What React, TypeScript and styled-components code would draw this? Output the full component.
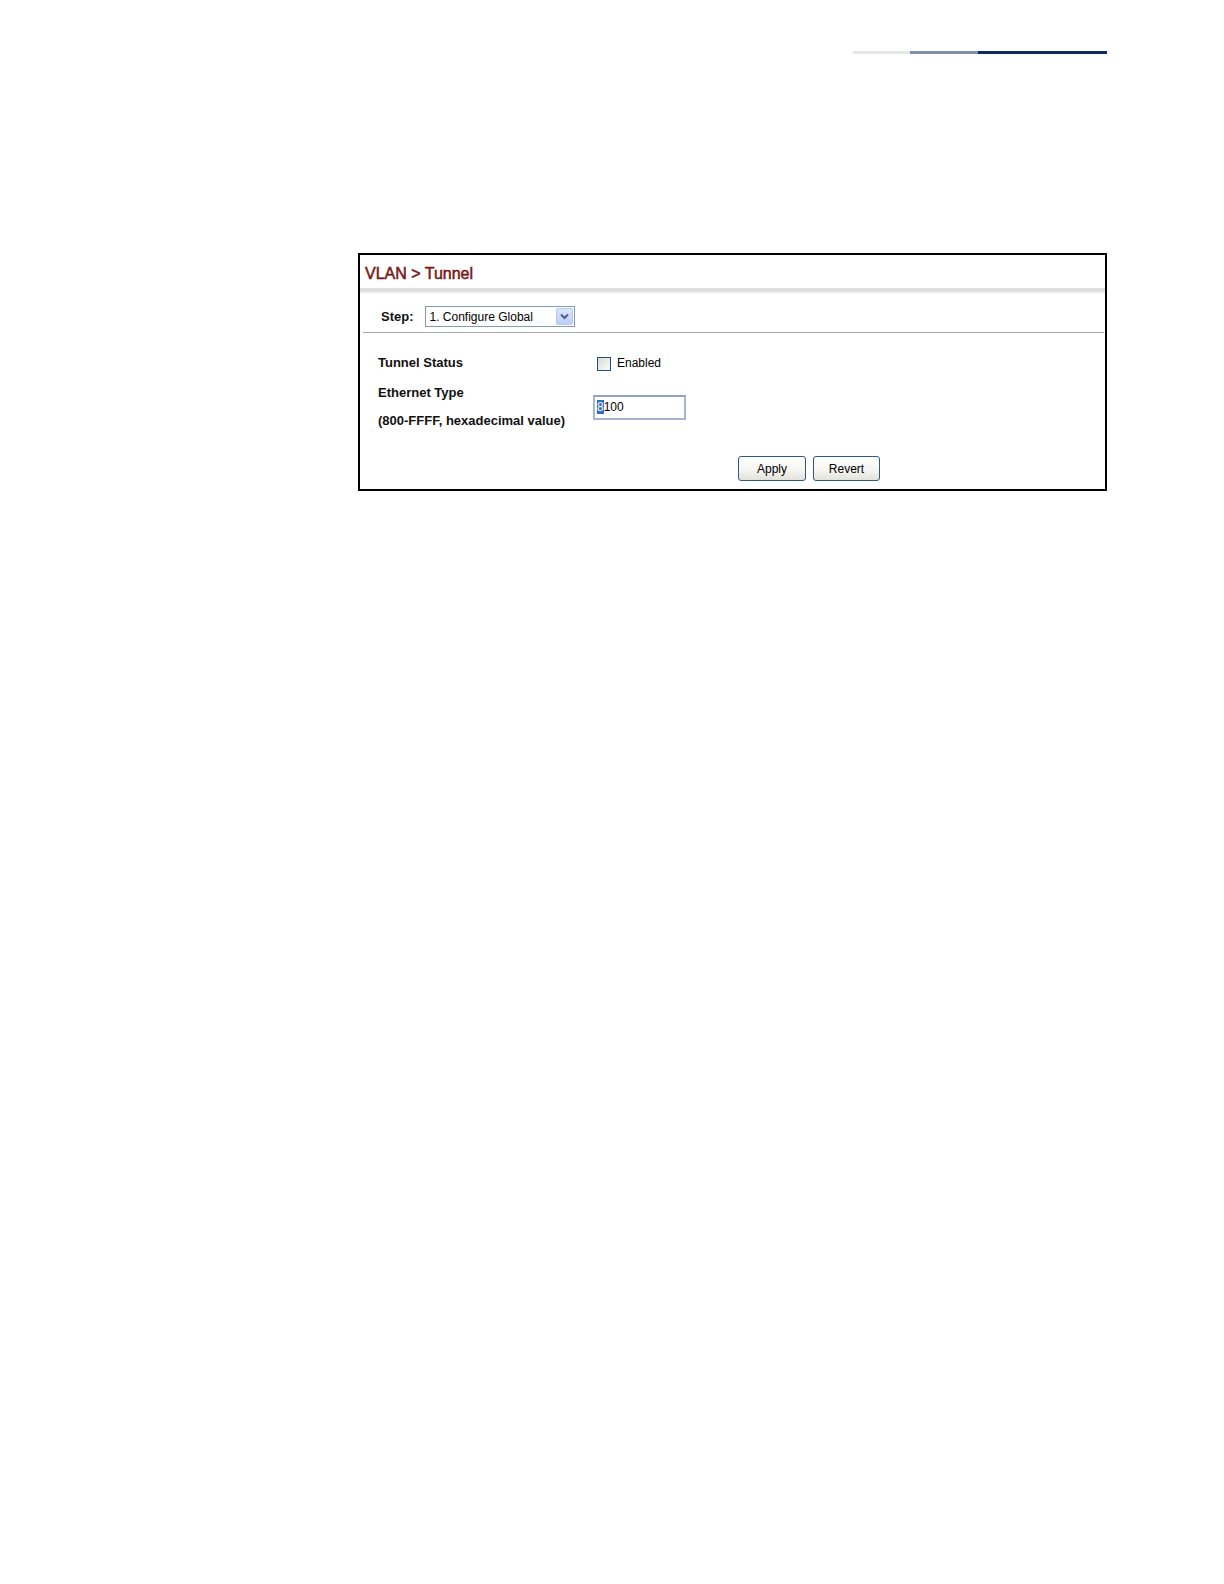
import styled, { createGlobalStyle } from 'styled-components'

const GlobalStyle = createGlobalStyle`
  html, body {
    margin: 0;
    padding: 0;
    background: #ffffff;
  }
  body {
    font-family: "Liberation Sans", Arial, sans-serif;
    color: #000;
  }
`

const Page = styled.div`
  box-sizing: border-box;
  padding: 51px 117px 0 0;
  display: flex;
  flex-direction: column;
  align-items: flex-end;
`

const HeaderRule = styled.div`
  display: flex;
  width: 254px;
  height: 3px;
`

const RuleSegment = styled.div<{ $w: number; $color: string }>`
  width: ${p => p.$w}px;
  height: 100%;
  background: ${p => p.$color};
`

const Panel = styled.div`
  margin-top: 199px;
  width: 749px;
  height: 238px;
  box-sizing: border-box;
  border: 2px solid #000;
  display: flex;
  flex-direction: column;
`

const TitleBar = styled.div`
  padding: 9px 0 4px 5px;
  font-size: 16px;
  line-height: 20px;
  color: #761a1a;
  -webkit-text-stroke: 0.55px #761a1a;
`

const TitleShade = styled.div`
  height: 6px;
  background: linear-gradient(to bottom, #e6e6e6, #d8d8d8 35%, #eeeeee 75%, #ffffff);
`

const StepRow = styled.div`
  display: flex;
  align-items: center;
  gap: 11px;
  padding: 12px 0 5px 18px;
  border-bottom: 1px solid #a6a6a6;
  margin: 0 1px 0 3px;
`

const BoldLabel = styled.span`
  font-size: 13px;
  font-weight: bold;
  line-height: 16px;
  color: #111;
`

const Select = styled.div`
  width: 150px;
  height: 21px;
  box-sizing: border-box;
  border: 1px solid #7f9db9;
  display: flex;
  align-items: center;
  justify-content: space-between;
  padding: 0 1px 0 4px;
  font-size: 12px;
`

const SelectArrow = styled.div`
  width: 17px;
  height: 17px;
  box-sizing: border-box;
  border: 1px solid #b9c8ec;
  border-radius: 2px;
  background: linear-gradient(to bottom, #dbe5fc, #bccdf7);
  display: flex;
  align-items: center;
  justify-content: center;
`

const Form = styled.div`
  padding: 20px 0 0 18px;
  display: flex;
  flex-direction: column;
`

const FieldRow = styled.div<{ $gap?: number }>`
  display: grid;
  grid-template-columns: 215px 1fr;
  align-items: center;
  margin-top: ${p => p.$gap ?? 0}px;
`

const LabelStack = styled.div`
  display: flex;
  flex-direction: column;
  gap: 12px;
`

const CheckLabel = styled.label`
  display: flex;
  align-items: center;
  gap: 6px;
  padding-left: 4px;
  height: 20px;
  font-size: 12px;
`

const CheckBox = styled.span`
  width: 14px;
  height: 14px;
  box-sizing: border-box;
  border: 1px solid #1c5180;
  background: linear-gradient(135deg, #dcdcd6, #f4f4f2 80%, #ffffff);
  margin-top: 2px;
`

const TextField = styled.div`
  width: 93px;
  height: 25px;
  box-sizing: border-box;
  border: 2px solid #a5b7cf;
  border-top-color: #8fa4c0;
  display: flex;
  align-items: center;
  padding-left: 2px;
  font-size: 12px;
`

const Selected = styled.span`
  background: #316ac5;
  color: #fff;
`

const ButtonRow = styled.div`
  display: flex;
  gap: 7px;
  margin-top: 27px;
  padding-left: 378px;
`

const Button = styled.button<{ $w: number }>`
  width: ${p => p.$w}px;
  height: 25px;
  box-sizing: border-box;
  border: 1px solid #2f5a86;
  border-radius: 3px;
  background: linear-gradient(to bottom, #ffffff, #f4f4f0 60%, #e2e2da);
  font-family: "Liberation Sans", Arial, sans-serif;
  font-size: 12px;
  color: #000;
  padding: 0;
`

export default function App() {
  return (
    <>
      <GlobalStyle />
      <Page>
        <HeaderRule>
          <RuleSegment $w={57} $color="#e5e6e8" />
          <RuleSegment $w={68} $color="#8090b0" />
          <RuleSegment $w={129} $color="#0c2a60" />
        </HeaderRule>
        <Panel>
          <TitleBar>VLAN &gt; Tunnel</TitleBar>
          <TitleShade />
          <StepRow>
            <BoldLabel>Step:</BoldLabel>
            <Select>
              <span>1. Configure Global</span>
              <SelectArrow>
                <svg width="9" height="7" viewBox="0 0 9 7">
                  <path d="M1 1.5 L4.5 5 L8 1.5" fill="none" stroke="#4d6185" strokeWidth="2" />
                </svg>
              </SelectArrow>
            </Select>
          </StepRow>
          <Form>
            <FieldRow>
              <BoldLabel>Tunnel Status</BoldLabel>
              <CheckLabel>
                <CheckBox />
                Enabled
              </CheckLabel>
            </FieldRow>
            <FieldRow $gap={12}>
              <LabelStack>
                <BoldLabel>Ethernet Type</BoldLabel>
                <BoldLabel>(800-FFFF, hexadecimal value)</BoldLabel>
              </LabelStack>
              <TextField>
                <Selected>8</Selected>100
              </TextField>
            </FieldRow>
          </Form>
          <ButtonRow>
            <Button $w={68}>Apply</Button>
            <Button $w={67}>Revert</Button>
          </ButtonRow>
        </Panel>
      </Page>
    </>
  )
}
